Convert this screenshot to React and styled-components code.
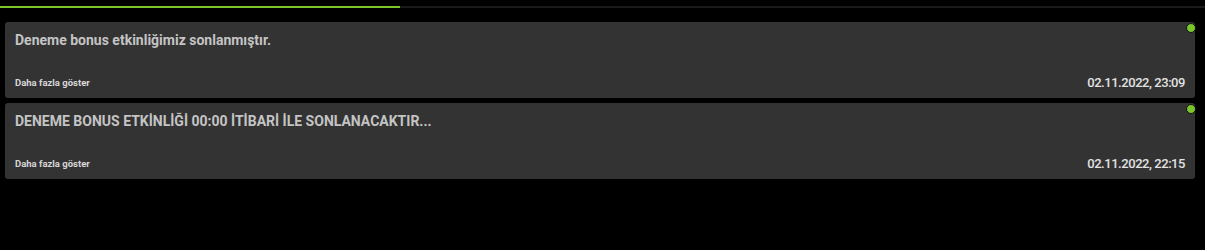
import React from 'react';
import styled, { createGlobalStyle } from 'styled-components';

const GlobalStyle = createGlobalStyle`
  html, body {
    margin: 0;
    background: #000;
    font-family: Roboto, "Liberation Sans", sans-serif;
  }
`;

const Page = styled.div`
  width: 1205px;
  height: 250px;
  background: #000;
  padding-top: 6px;
  box-sizing: border-box;
`;

// progress track on top of the list
const Track = styled.div`
  height: 2px;
  background: #1a1a1a;
  margin-bottom: 14px;
`;

const Progress = styled.div`
  height: 100%;
  background: #7ac52c;
`;

const List = styled.div`
  display: flex;
  flex-direction: column;
  gap: 5px;
  padding: 0 10px 0 5px;
`;

const Card = styled.div`
  position: relative;
  height: 76px;
  box-sizing: border-box;
  background: #333333;
  border-radius: 3px;
  padding: 10px 9px 8px 10px;
  display: flex;
  flex-direction: column;
  justify-content: space-between;
`;

const Dot = styled.span`
  position: absolute;
  top: 1px;
  right: -1px;
  width: 8px;
  height: 8px;
  border-radius: 50%;
  background: #7ac52c;
  border: 1px solid #111;
`;

const Title = styled.div`
  font-size: 14px;
  font-weight: 700;
  color: #c4c4c4;
  line-height: 16px;
`;

const Footer = styled.div`
  display: flex;
  justify-content: space-between;
  align-items: flex-end;
`;

const More = styled.span`
  font-size: 9.5px;
  font-weight: 700;
  color: #d8d8d8;
  line-height: 12px;
  margin-bottom: 1px;
`;

const DateText = styled.span`
  font-size: 13px;
  font-weight: 500;
  letter-spacing: -0.45px;
  color: #e2e2e2;
  line-height: 15px;
  margin-right: 1px;
`;

const messages = [
  { title: 'Deneme bonus etkinliğimiz sonlanmıştır.', date: '02.11.2022, 23:09' },
  { title: 'DENEME BONUS ETKİNLİĞİ 00:00 İTİBARİ İLE SONLANACAKTIR...', date: '02.11.2022, 22:15' },
];

export default function App() {
  return (
    <Page>
      <GlobalStyle />
      <Track>
        <Progress style={{ width: 400 }} />
      </Track>
      <List>
        {messages.map((m, i) => (
          <Card key={i}>
            <Dot />
            <Title>{m.title}</Title>
            <Footer>
              <More>Daha fazla göster</More>
              <DateText>{m.date}</DateText>
            </Footer>
          </Card>
        ))}
      </List>
    </Page>
  );
}
